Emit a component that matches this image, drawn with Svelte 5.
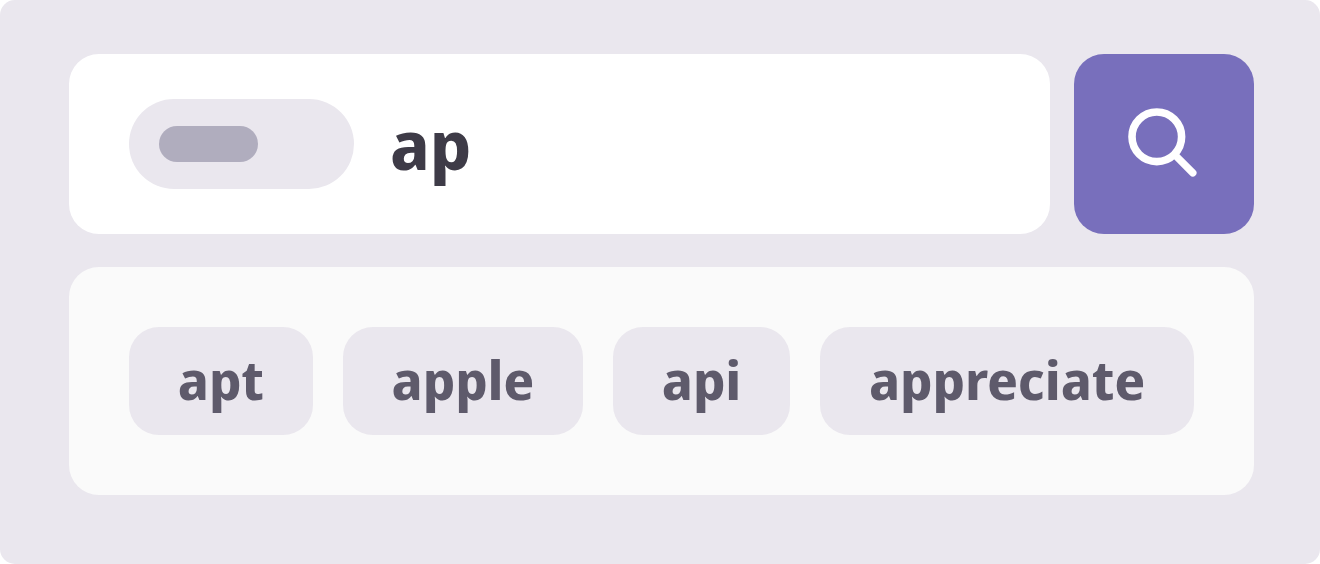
<script>
  let query = $state('ap');
  const suggestions = ['apt', 'apple', 'api', 'appreciate'];
</script>

<main>
  <form class="search" role="search" onsubmit={(e) => e.preventDefault()}>
    <div class="field">
      <span class="scope"><span class="bar"></span></span>
      <input type="text" aria-label="Search" bind:value={query} />
    </div>
    <button class="submit" type="submit" aria-label="Search">
      <svg viewBox="0 0 72 72" width="72" height="72" fill="none" stroke="currentColor" stroke-width="7.6" stroke-linecap="round">
        <circle cx="28.8" cy="28.8" r="24.8" />
        <path d="M47 47L64.8 64.8" stroke-width="7.4" />
      </svg>
    </button>
  </form>
  <div class="suggestions">
    {#each suggestions as word}
      <button type="button" onclick={() => (query = word)}>{word}</button>
    {/each}
  </div>
</main>

<style>
  :global(body) {
    background: #fff;
  }
  main {
    box-sizing: border-box;
    padding: 54px 66px 69px 69px;
    border-radius: 15px;
    background: #eae7ee;
    font-family: 'Noto Sans Display', 'Noto Sans', sans-serif;
    font-weight: 700;
  }
  .search {
    display: flex;
    gap: 24px;
    margin-bottom: 33px;
  }
  .field {
    flex: 1;
    min-width: 0;
    display: flex;
    align-items: center;
    gap: 36px;
    padding: 0 60px;
    border-radius: 30px;
    background: #fff;
  }
  .scope {
    flex: none;
    box-sizing: border-box;
    width: 225px;
    padding: 27px 30px;
    border-radius: 45px;
    background: #eae7ee;
  }
  .bar {
    display: block;
    width: 99px;
    height: 36px;
    border-radius: 18px;
    background: #b0adbe;
  }
  input {
    flex: 1;
    min-width: 0;
    padding: 0 0 3px;
    border: 0;
    outline: 0;
    background: none;
    color: #3e3b47;
    font: inherit;
    font-size: 69px;
    line-height: 96px;
  }
  .submit {
    display: grid;
    place-items: center;
    width: 180px;
    height: 180px;
    padding: 0;
    border: 0;
    border-radius: 30px;
    background: #786fbc;
    color: #fff;
  }
  .suggestions {
    display: flex;
    flex-wrap: wrap;
    gap: 30px;
    padding: 60px;
    border-radius: 30px;
    background: #fafafa;
  }
  .suggestions button {
    flex: 1 1 auto;
    padding: 13px 48px 17px;
    border: 0;
    border-radius: 30px;
    background: #eae7ee;
    color: #5e5a6b;
    font: inherit;
    font-size: 54px;
    line-height: 78px;
  }
</style>
